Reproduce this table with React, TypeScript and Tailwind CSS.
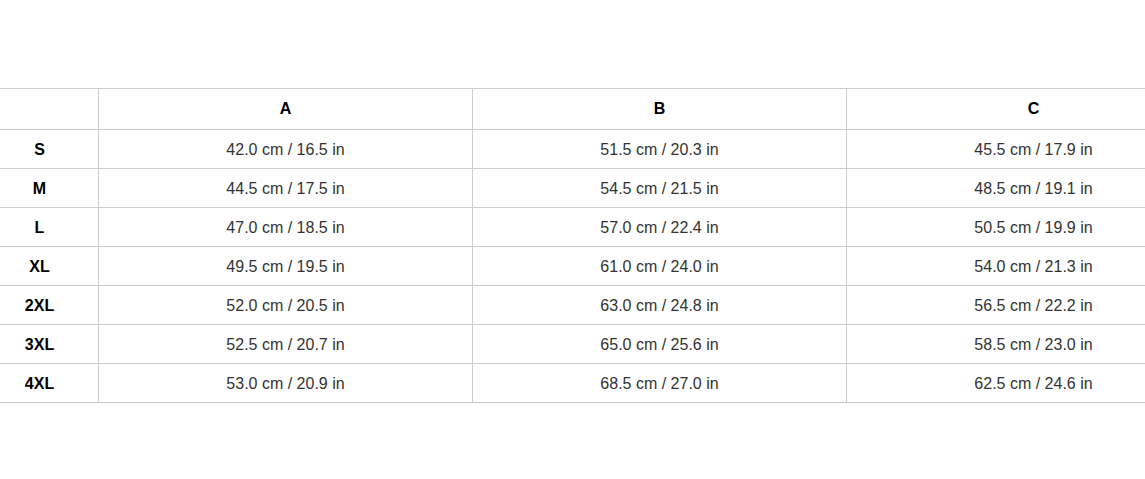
const sizes = [
  { size: 'S', a: '42.0 cm / 16.5 in', b: '51.5 cm / 20.3 in', c: '45.5 cm / 17.9 in' },
  { size: 'M', a: '44.5 cm / 17.5 in', b: '54.5 cm / 21.5 in', c: '48.5 cm / 19.1 in' },
  { size: 'L', a: '47.0 cm / 18.5 in', b: '57.0 cm / 22.4 in', c: '50.5 cm / 19.9 in' },
  { size: 'XL', a: '49.5 cm / 19.5 in', b: '61.0 cm / 24.0 in', c: '54.0 cm / 21.3 in' },
  { size: '2XL', a: '52.0 cm / 20.5 in', b: '63.0 cm / 24.8 in', c: '56.5 cm / 22.2 in' },
  { size: '3XL', a: '52.5 cm / 20.7 in', b: '65.0 cm / 25.6 in', c: '58.5 cm / 23.0 in' },
  { size: '4XL', a: '53.0 cm / 20.9 in', b: '68.5 cm / 27.0 in', c: '62.5 cm / 24.6 in' },
];

export default function App() {
  return (
    <div className="w-full h-[479px] overflow-hidden bg-white font-['Liberation_Sans',Arial,sans-serif] text-[16px] text-[#333]">
      <div className="pt-[88px]">
        {/* table is wider than the window; first column starts off-screen */}
        <table className="w-[1240px] -ml-[20px] border-collapse table-fixed">
          <colgroup>
            <col className="w-[118px]" />
            <col className="w-[374px]" />
            <col className="w-[374px]" />
            <col className="w-[374px]" />
          </colgroup>
          <thead>
            <tr className="h-[41px]">
              <th className="border border-[#ccc]"></th>
              <th className="border border-[#ccc] font-bold text-black text-center">A</th>
              <th className="border border-[#ccc] font-bold text-black text-center">B</th>
              <th className="border border-[#ccc] font-bold text-black text-center">C</th>
            </tr>
          </thead>
          <tbody>
            {sizes.map((row) => (
              <tr key={row.size} className="h-[39px]">
                <td className="border border-[#ccc] pt-px font-bold text-black text-center">{row.size}</td>
                <td className="border border-[#ccc] pt-px text-center">{row.a}</td>
                <td className="border border-[#ccc] pt-px text-center">{row.b}</td>
                <td className="border border-[#ccc] pt-px text-center">{row.c}</td>
              </tr>
            ))}
          </tbody>
        </table>
      </div>
    </div>
  );
}
